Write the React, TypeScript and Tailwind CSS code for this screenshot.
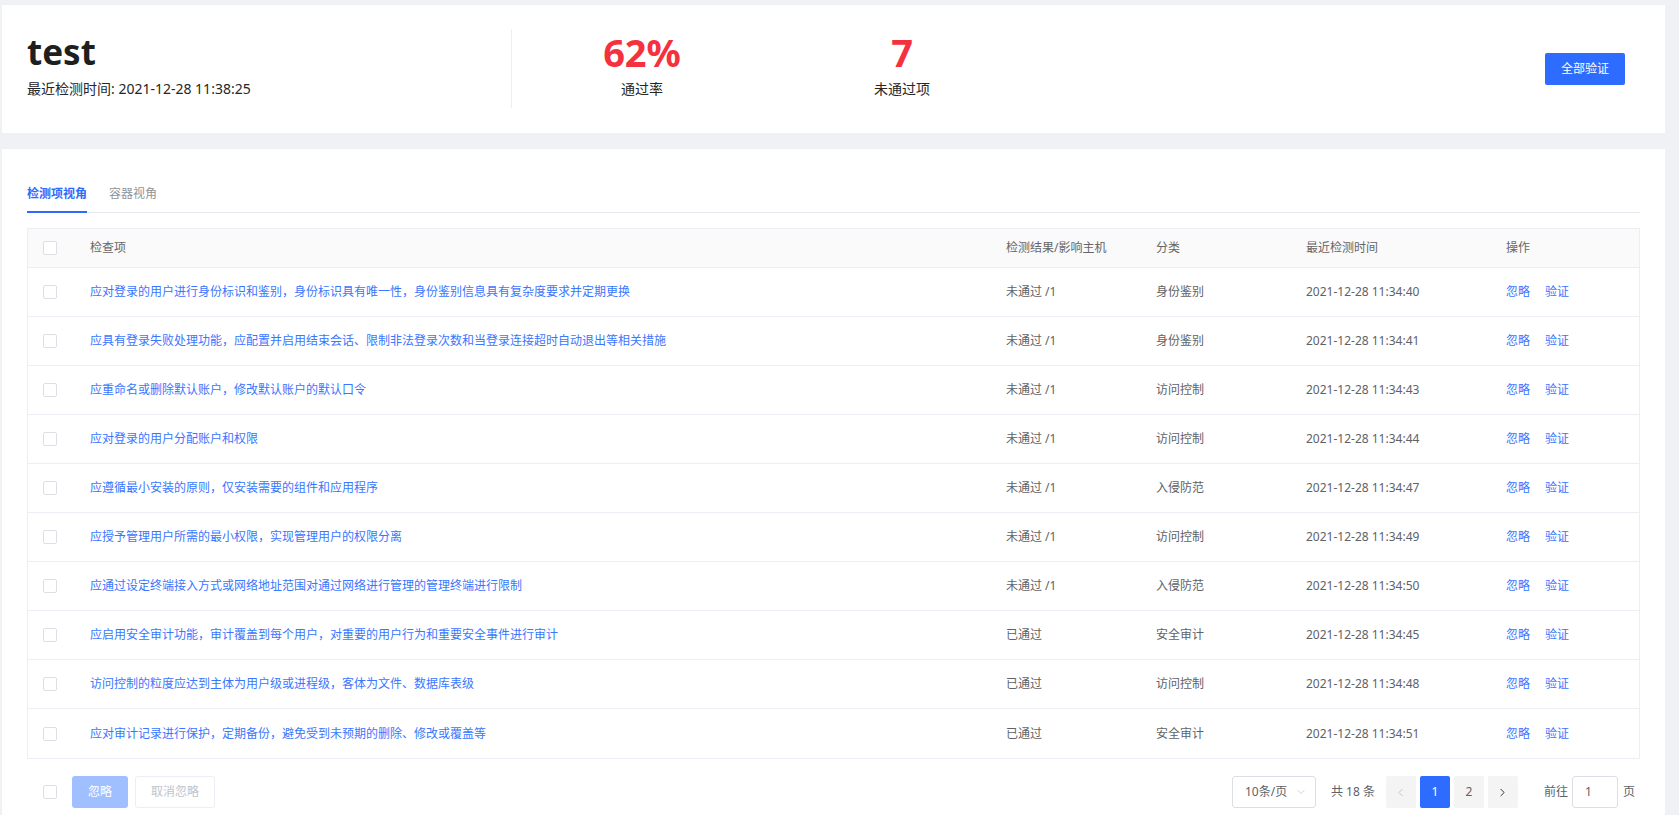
import React from 'react';
import { ChevronLeft, ChevronRight, ChevronDown } from 'lucide-react';

interface Row {
  name: string;
  result: string;
  category: string;
  time: string;
}

const rows: Row[] = [
  { name: '应对登录的用户进行身份标识和鉴别，身份标识具有唯一性，身份鉴别信息具有复杂度要求并定期更换', result: '未通过 /1', category: '身份鉴别', time: '2021-12-28 11:34:40' },
  { name: '应具有登录失败处理功能，应配置并启用结束会话、限制非法登录次数和当登录连接超时自动退出等相关措施', result: '未通过 /1', category: '身份鉴别', time: '2021-12-28 11:34:41' },
  { name: '应重命名或删除默认账户，修改默认账户的默认口令', result: '未通过 /1', category: '访问控制', time: '2021-12-28 11:34:43' },
  { name: '应对登录的用户分配账户和权限', result: '未通过 /1', category: '访问控制', time: '2021-12-28 11:34:44' },
  { name: '应遵循最小安装的原则，仅安装需要的组件和应用程序', result: '未通过 /1', category: '入侵防范', time: '2021-12-28 11:34:47' },
  { name: '应授予管理用户所需的最小权限，实现管理用户的权限分离', result: '未通过 /1', category: '访问控制', time: '2021-12-28 11:34:49' },
  { name: '应通过设定终端接入方式或网络地址范围对通过网络进行管理的管理终端进行限制', result: '未通过 /1', category: '入侵防范', time: '2021-12-28 11:34:50' },
  { name: '应启用安全审计功能，审计覆盖到每个用户，对重要的用户行为和重要安全事件进行审计', result: '已通过', category: '安全审计', time: '2021-12-28 11:34:45' },
  { name: '访问控制的粒度应达到主体为用户级或进程级，客体为文件、数据库表级', result: '已通过', category: '访问控制', time: '2021-12-28 11:34:48' },
  { name: '应对审计记录进行保护，定期备份，避免受到未预期的删除、修改或覆盖等', result: '已通过', category: '安全审计', time: '2021-12-28 11:34:51' },
];

const Checkbox = () => (
  <span className="block w-[14px] h-[14px] rounded-[2px] border border-[#dcdfe6] bg-white" />
);

const Stat = ({ value, label }: { value: string; label: string }) => (
  <div className="w-[260px] flex flex-col items-center">
    <div className="text-[38px] leading-[44px] font-bold text-[#f5313f]">{value}</div>
    <div className="mt-[5px] text-[14px] leading-[20px] text-[#262626]">{label}</div>
  </div>
);

const cols = 'grid grid-cols-[62px_916px_150px_150px_200px_1fr] items-center';

export default function App() {
  return (
    <div className="h-[815px] overflow-hidden bg-[#f0f1f5] pl-[2px] pr-[14px] pt-[5px] font-['Noto_Sans','Noto_Sans_CJK_SC',sans-serif]">
      {/* summary */}
      <section className="flex items-start h-[128px] bg-white pl-[25px] pr-[40px] pt-[25px]">
        <div className="w-[484px]">
          <h1 className="text-[35px] leading-[44px] font-bold text-[#1f1f1f]">test</h1>
          <p className="mt-[5px] text-[14px] leading-[20px] text-[#262626]">最近检测时间: 2021-12-28 11:38:25</p>
        </div>
        <div className="w-px h-[79px] bg-[#ebeef5] -mt-px" />
        <Stat value="62%" label="通过率" />
        <Stat value="7" label="未通过项" />
        <div className="flex-1" />
        <button className="mt-[23px] w-[80px] h-[32px] rounded-[2px] bg-[#2e6bff] text-white text-[12px]">全部验证</button>
      </section>

      {/* list */}
      <section className="mt-[16px] bg-white px-[25px] pt-[28px] h-[700px]">
        <div className="flex border-b border-[#e4e7ed]">
          <div className="h-[36px] -mb-px flex items-center border-b-2 border-[#2e6bff] text-[12px] font-semibold text-[#2e6bff]">检测项视角</div>
          <div className="ml-[22px] h-[36px] -mb-px flex items-center border-b-2 border-transparent text-[12px] text-[#909399]">容器视角</div>
        </div>

        <div className="mt-[15px] border border-[#ebeef5] text-[12px]">
          <div className={`${cols} h-[39px] bg-[#fafafa] border-b border-[#ebeef5] text-[#666]`}>
            <div className="pl-[15px]"><Checkbox /></div>
            <div>检查项</div>
            <div>检测结果/影响主机</div>
            <div>分类</div>
            <div>最近检测时间</div>
            <div>操作</div>
          </div>
          {rows.map((r, i) => (
            <div key={i} className={`${cols} h-[49px] border-b border-[#ebeef5] last:border-b-0 text-[#606266]`}>
              <div className="pl-[15px]"><Checkbox /></div>
              <div className="text-[#3a76ff] truncate">{r.name}</div>
              <div>{r.result}</div>
              <div>{r.category}</div>
              <div>{r.time}</div>
              <div className="flex gap-[15px] text-[#3a76ff]">
                <span>忽略</span>
                <span>验证</span>
              </div>
            </div>
          ))}
        </div>

        <div className="mt-[17px] flex items-center justify-between">
          <div className="flex items-center pl-[16px]">
            <Checkbox />
            <button className="ml-[15px] w-[56px] h-[32px] rounded-[3px] bg-[#a0bfff] text-white text-[12px]">忽略</button>
            <button className="ml-[7px] w-[80px] h-[32px] rounded-[3px] border border-[#ebeef5] bg-white text-[#c0c4cc] text-[12px]">取消忽略</button>
          </div>
          <div className="flex items-center pr-[5px] text-[12px] text-[#606266]">
            <div className="w-[84px] h-[32px] border border-[#dcdfe6] rounded-[3px] flex items-center justify-between pl-[12px] pr-[8px]">
              <span>10条/页</span>
              <ChevronDown size={12} strokeWidth={1.5} className="text-[#c0c4cc]" />
            </div>
            <span className="ml-[15px]">共 18 条</span>
            <div className="ml-[11px] flex gap-[4px]">
              <div className="w-[30px] h-[32px] rounded-[2px] bg-[#f4f4f5] flex items-center justify-center text-[#c0c4cc]">
                <ChevronLeft size={13} strokeWidth={1.8} />
              </div>
              <div className="w-[30px] h-[32px] rounded-[2px] bg-[#2e6bff] flex items-center justify-center text-white">1</div>
              <div className="w-[30px] h-[32px] rounded-[2px] bg-[#f4f4f5] flex items-center justify-center">2</div>
              <div className="w-[30px] h-[32px] rounded-[2px] bg-[#f4f4f5] flex items-center justify-center text-[#303133]">
                <ChevronRight size={13} strokeWidth={1.8} />
              </div>
            </div>
            <span className="ml-[26px]">前往</span>
            <div className="ml-[4px] w-[46px] h-[32px] border border-[#dcdfe6] rounded-[3px] flex items-center pl-[12px]">1</div>
            <span className="ml-[5px]">页</span>
          </div>
        </div>
      </section>
    </div>
  );
}
